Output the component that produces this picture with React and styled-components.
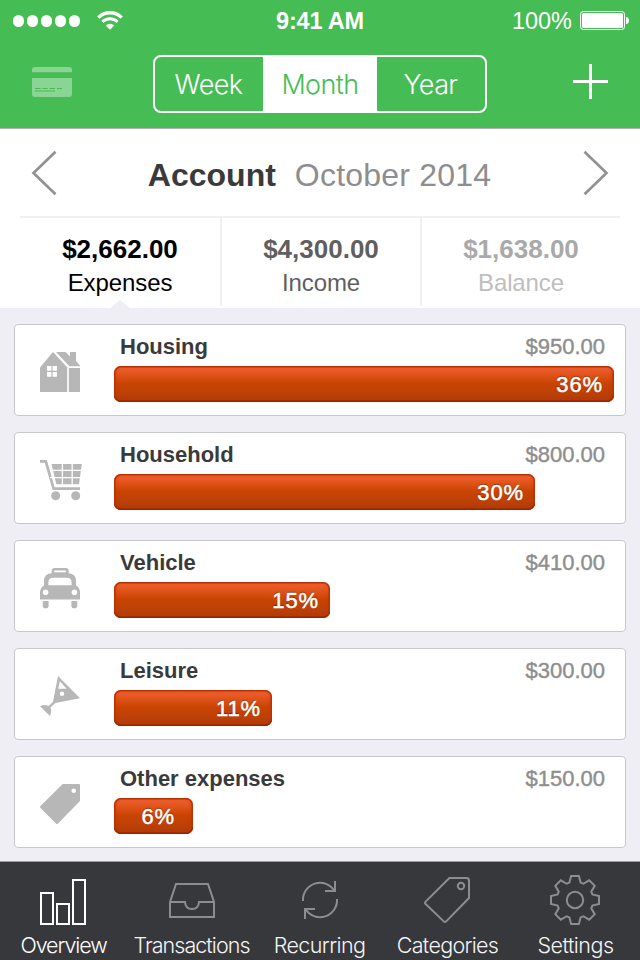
import React from "react"
import styled, { createGlobalStyle } from "styled-components"

const expenses = [
  { name: "Housing", amount: 950, percent: 36, icon: HouseIcon },
  { name: "Household", amount: 800, percent: 30, icon: CartIcon },
  { name: "Vehicle", amount: 410, percent: 15, icon: CarIcon },
  { name: "Leisure", amount: 300, percent: 11, icon: CocktailIcon },
  { name: "Other expenses", amount: 150, percent: 6, icon: TagIcon },
]

const stats = [
  { label: "Expenses", value: "$2,662.00", color: "#000", soft: "#000", active: true },
  { label: "Income", value: "$4,300.00", color: "#5f5f5f", soft: "#5f5f5f" },
  { label: "Balance", value: "$1,638.00", color: "#a9a9a9", soft: "#bebebe" },
]

const tabs = [
  { label: "Overview", icon: BarsIcon, active: true, track: -1.1 },
  { label: "Transactions", icon: TrayIcon, track: -0.95 },
  { label: "Recurring", icon: SyncIcon, track: -0.6 },
  { label: "Categories", icon: TagOutlineIcon, track: -0.7 },
  { label: "Settings", icon: GearIcon, track: -0.5 },
]

const maxAmount = Math.max(...expenses.map(e => e.amount))

function WifiIcon() {
  return (
    <svg width="26" height="20" viewBox="0 0 26 20" fill="none" stroke="#fff">
      <path d="M1.3 6.6A16.6 16.6 0 0 1 24.7 6.6" strokeWidth="3.4" />
      <path d="M5.4 10.9A10.9 10.9 0 0 1 20.6 10.9" strokeWidth="3" />
      <path d="M13 18.7L8.8 14.5A6 6 0 0 1 17.2 14.5Z" fill="#fff" stroke="none" />
    </svg>
  )
}

function BatteryIcon() {
  return (
    <svg width="50" height="20" viewBox="0 0 50 20">
      <rect x="0.5" y="0.5" width="44" height="18" rx="2.8" fill="none" stroke="#fff" />
      <rect x="2" y="2" width="41" height="15" rx="1.5" fill="#fff" />
      <path d="M46 6C50 6 50 13 46 13Z" fill="#fff" />
    </svg>
  )
}

function CardIcon() {
  return (
    <svg width="40" height="30" viewBox="0 0 40 30">
      <path d="M0 5.3V3A3 3 0 0 1 3 0H37A3 3 0 0 1 40 3V5.3Z" fill="#8ad495" />
      <path d="M0 11H40V27A3 3 0 0 1 37 30H3A3 3 0 0 1 0 27Z" fill="#8ad495" />
      <path d="M3 21.500H8.500M10.500 21.500H15.700M17.700 21.500H23M25 21.500H30M3 24H23" stroke="#46bc54" strokeWidth="1.2" />
    </svg>
  )
}

function PlusIcon() {
  return (
    <svg width="35" height="35" viewBox="0 0 35 35" stroke="#fff" strokeWidth="3">
      <path d="M0 17.5H35M17.5 0V35" />
    </svg>
  )
}

function Chevron({ flip }) {
  return (
    <svg width="26" height="46" viewBox="0 0 26 46" fill="none" stroke="#929292" strokeWidth="2.7">
      <path d={flip ? "M1.5 1.8L23.5 23L1.5 44.2" : "M24.5 1.8L2.5 23L24.5 44.2"} />
    </svg>
  )
}

function HouseIcon() {
  return (
    <svg width="42" height="41" viewBox="0 0 42 41" fill="#b7b7b7">
      <path d="M13 0L27.2 15.2V40H0V15.4Z" />
      <path d="M16 0H25.5L30 4.6V0H36V9L40 13.4V14.2H29.3Z" />
      <path d="M28.8 16H40V40H28.8Z" />
      <path d="M7 14H11.4V18.7H7ZM12.6 14H17V18.7H12.6ZM7 20H11.4V24.7H7ZM12.6 20H17V24.7H12.6Z" fill="#fff" />
    </svg>
  )
}

function CartIcon() {
  return (
    <svg width="42" height="41" viewBox="0 0 42 41" fill="#b7b7b7">
      <path d="M0 1.3H5.8L13.6 28.6H40" fill="none" stroke="#b7b7b7" strokeWidth="2.7" />
      <path d="M11.5 4H41.8L39 24.2H16.3Z" />
      <path d="M10 10.4H42M10 17.7H42M22.4 3V25M32.2 3V25" stroke="#fff" strokeWidth="1.3" />
      <circle cx="15.7" cy="35.7" r="4.5" />
      <circle cx="35.7" cy="35.7" r="4.5" />
    </svg>
  )
}

function CarIcon() {
  return (
    <svg width="42" height="41" viewBox="0 0 42 41" fill="#b7b7b7">
      <path d="M11.7 6V3Q11.7 0 15 0H25.4Q28.7 0 28.7 3V6Z" />
      <path d="M4 17.6V13Q4 5.2 12 5.2H28Q36 5.2 36 13V17.6Q40 20 40 25V31.6H0V25Q0 20 4 17.6Z" />
      <path d="M2.8 33H8.6V38Q8.6 40.3 5.7 40.3Q2.8 40.3 2.8 38ZM31.4 33H37.2V38Q37.2 40.3 34.3 40.3Q31.4 40.3 31.4 38Z" />
      <g fill="#fff">
        <rect x="14" y="2.5" width="12" height="1.7" rx="0.8" />
        <path d="M8.4 17.2V14.4Q8.4 9.7 13 9.7H27Q31.6 9.7 31.6 14.4V17.2Z" />
        <circle cx="5.6" cy="24.2" r="2.8" />
        <circle cx="34.4" cy="24.2" r="2.8" />
      </g>
    </svg>
  )
}

function CocktailIcon() {
  return (
    <svg width="42" height="41" viewBox="0 0 42 41" fill="#b7b7b7">
      <path d="M18 0L40 22.2L15.4 27L10.4 31.6Q12 36 10 40L0 30.2Q4 28 8.6 30L13 25.8Z" />
      <path d="M19.8 5.2L26.6 12.7H18.2Z" fill="#fff" />
      <circle cx="22" cy="17.8" r="2.2" fill="#fff" />
    </svg>
  )
}

function TagIcon() {
  return (
    <svg width="42" height="41" viewBox="0 0 42 41" fill="#b7b7b7">
      <path d="M22.7 0H39Q40 0 40 1V17L18 39.4Q17 40.4 16 39.4L0.5 24Q-0.4 23 0.5 22Z" />
      <circle cx="33.7" cy="6.7" r="2.3" fill="#fff" />
    </svg>
  )
}

function BarsIcon() {
  return (
    <TabSvg viewBox="0 0 52 52" $active>
      <path d="M3 19H15V50H3ZM19 30H31V50H19ZM35 6H47V50H35Z" />
    </TabSvg>
  )
}

function TrayIcon() {
  return (
    <TabSvg viewBox="0 0 52 52">
      <path d="M4 28L10 10H42L48 28V43H4Z" />
      <path d="M4 28H19Q19.4 35 26 35Q32.6 35 33 28H48" />
    </TabSvg>
  )
}

function SyncIcon() {
  return (
    <TabSvg viewBox="0 0 52 52">
      <path d="M9 27A17 17 0 0 1 40.5 17M31 17H41V7" />
      <path d="M43 25A17 17 0 0 1 11.5 35M21 35H11V45" />
    </TabSvg>
  )
}

function TagOutlineIcon() {
  return (
    <TabSvg viewBox="0 0 52 52">
      <path d="M27.4 4H44.5Q47 4 47 6.5V24L24.2 47.4Q23 48.6 21.8 47.4L3.6 30Q2.4 28.8 3.6 27.6Z" />
      <circle cx="39" cy="12" r="3.2" />
    </TabSvg>
  )
}

function GearIcon() {
  // eight teeth turned around the hub
  const teeth = [0, 1, 2, 3, 4, 5, 6, 7].flatMap(i => {
    const a = (i * Math.PI) / 4
    return [[-5.6, -17.4], [-3.9, -24], [3.9, -24], [5.6, -17.4]].map(
      ([x, y]) =>
        `${25 + x * Math.cos(a) - y * Math.sin(a)},${26 + x * Math.sin(a) + y * Math.cos(a)}`
    )
  })
  return (
    <TabSvg viewBox="0 0 52 52">
      <polygon points={teeth.join(" ")} />
      <circle cx="25" cy="26" r="8.2" />
    </TabSvg>
  )
}

const App = () => {
  return (
    <Screen>
      <GlobalStyle />
      <Header>
        <StatusBar>
          <Signal>
            <i /><i /><i /><i /><i />
            <WifiIcon />
          </Signal>
          <Clock>9:41 AM</Clock>
          <Power>
            <span>100%</span>
            <BatteryIcon />
          </Power>
        </StatusBar>
        <NavBar>
          <NavButton $top={12}>
            <CardIcon />
          </NavButton>
          <Segments>
            <Segment $width={108}>Week</Segment>
            <Segment $width={114} $active>Month</Segment>
            <Segment $width={108}>Year</Segment>
          </Segments>
          <NavButton $top={9}>
            <PlusIcon />
          </NavButton>
        </NavBar>
      </Header>

      <Summary>
        <Period>
          <Chevron />
          <Title>
            <strong>Account</strong>
            <span>October 2014</span>
          </Title>
          <Chevron flip />
        </Period>
        <Stats>
          {stats.map(s => (
            <Stat key={s.label} $color={s.color} $soft={s.soft} $active={s.active}>
              <strong>{s.value}</strong>
              <span>{s.label}</span>
            </Stat>
          ))}
        </Stats>
      </Summary>

      <List>
        {expenses.map(({ name, amount, percent, icon: Icon }) => (
          <Card key={name}>
            <IconCell>
              <Icon />
            </IconCell>
            <Details>
              <Row>
                <Name>{name}</Name>
                <Amount>${amount}.00</Amount>
              </Row>
              <Bar
                $short={percent < 10}
                style={{ width: Math.round((amount / maxAmount) * 500) }}
              >
                {percent}%
              </Bar>
            </Details>
          </Card>
        ))}
      </List>

      <TabBar>
        {tabs.map(({ label, icon: Icon, active, track }) => (
          <Tab key={label}>
            <Icon />
            <TabLabel $track={track} $active={active}>{label}</TabLabel>
          </Tab>
        ))}
      </TabBar>
    </Screen>
  )
}

const GlobalStyle = createGlobalStyle`
  * {
    box-sizing: border-box;
  }
  body {
    margin: 0;
    font-family: "Liberation Sans", Arial, sans-serif;
    -webkit-font-smoothing: antialiased;
  }
  svg {
    display: block;
    flex: none;
  }
`

const Screen = styled.div`
  display: flex;
  flex-direction: column;
  width: 640px;
  height: 960px;
  overflow: hidden;
  background: #efeef4;
`

const Header = styled.header`
  height: 129px;
  background: #46bc54;
  border-bottom: 1px solid #b2b2b2;
`

const StatusBar = styled.div`
  display: grid;
  grid-template-columns: 1fr auto 1fr;
  align-items: center;
  height: 41px;
  padding: 0 10px 0 13px;
  color: #fff;
`

const Signal = styled.div`
  display: flex;
  align-items: center;
  gap: 2.8px;
  i {
    width: 11.2px;
    height: 11.2px;
    border-radius: 50%;
    background: #fff;
  }
  svg {
    margin-left: 14.5px;
  }
`

const Clock = styled.div`
  padding-right: 3px;
  font-size: 23.5px;
  font-weight: 700;
  letter-spacing: -0.2px;
  line-height: 42px;
`

const Power = styled.div`
  display: flex;
  align-items: center;
  justify-content: flex-end;
  gap: 8px;
  font-size: 23.5px;
  line-height: 42px;
`

const NavBar = styled.nav`
  display: flex;
  justify-content: space-between;
  align-items: flex-start;
  padding: 14px 32px 0;
`

const NavButton = styled.div`
  width: 40px;
  padding-top: ${p => p.$top}px;
  svg {
    margin-left: auto;
  }
`

const Segments = styled.div`
  display: flex;
  height: 58px;
  border: 2px solid #fff;
  border-radius: 8px;
`

const Segment = styled.div`
  width: ${p => p.$width}px;
  padding-right: ${p => (p.$active ? 0 : 1)}px;
  font-family: Inter, "Liberation Sans", sans-serif;
  font-size: 27px;
  font-weight: 300;
  letter-spacing: -0.6px;
  line-height: 55px;
  text-align: center;
  color: ${p => (p.$active ? "#46bc54" : "#fff")};
  background: ${p => (p.$active ? "#fff" : "transparent")};
`

const Summary = styled.section`
  height: 179px;
  background: #fff;
`

const Period = styled.div`
  display: flex;
  align-items: center;
  justify-content: space-between;
  height: 89px;
  margin: 0 20px;
  padding: 0 11px;
  border-bottom: 2px solid #f0f0f0;
`

const Title = styled.div`
  display: flex;
  gap: 19px;
  padding: 4px 1px 0 0;
  font-size: 32px;
  line-height: 40px;
  strong {
    color: #3a3a3a;
  }
  span {
    letter-spacing: 0.2px;
    color: #8e8e8e;
  }
`

const Stats = styled.div`
  display: flex;
  height: 90px;
  margin: 0 20px;
`

const Stat = styled.div`
  position: relative;
  flex: none;
  width: 200px;
  height: 88px;
  padding-top: 14px;
  text-align: center;
  line-height: 34px;
  &:not(:first-child) {
    border-left: 2px solid #f0f0f0;
  }
  strong,
  span {
    display: block;
  }
  strong {
    font-size: 26px;
    color: ${p => p.$color};
  }
  span {
    font-size: 24px;
    letter-spacing: -0.1px;
    color: ${p => p.$soft};
  }
  &:after {
    content: "";
    display: ${p => (p.$active ? "block" : "none")};
    position: absolute;
    left: 90px;
    bottom: -2px;
    border: 10px solid transparent;
    border-top: 0;
    border-bottom: 8px solid #efeef4;
  }
`

const List = styled.main`
  display: flex;
  flex-direction: column;
  gap: 16px;
  height: 553px;
  padding: 16px 14px 0;
`

const Card = styled.article`
  display: flex;
  flex: none;
  height: 92px;
  background: #fff;
  border: 1px solid #c8c8cb;
  border-radius: 4px;
`

const IconCell = styled.div`
  width: 99px;
  padding: 27px 0 0 25px;
`

const Details = styled.div`
  flex: 1;
  padding-top: 9px;
`

const Row = styled.div`
  display: flex;
  justify-content: space-between;
  padding: 0 20px 0 6px;
  font-size: 22px;
  line-height: 25px;
`

const Name = styled.div`
  font-weight: 700;
  color: #3a3a3a;
`

const Amount = styled.div`
  color: #8e8e8e;
  -webkit-text-stroke: 0.4px #8e8e8e;
`

const Bar = styled.div`
  height: 36px;
  margin-top: 7px;
  padding-right: ${p => (p.$short ? 18 : 11)}px;
  border-radius: 7px;
  background: linear-gradient(#f4663a, #e4561f 20%, #c94403 48%, #bf4106 70%, #b13b09);
  box-shadow: inset 0 -1.5px 0 #952500, inset 0 0 0 1.5px #bd3004,
    inset 0 0 4px 1px rgba(190, 45, 0, 0.4);
  color: #fff;
  font-size: 22px;
  letter-spacing: 0.9px;
  line-height: 37px;
  text-align: right;
  text-shadow: 0 -1px 1px rgba(60, 10, 0, 0.6);
  -webkit-text-stroke: 0.5px #fff;
`

const TabBar = styled.footer`
  display: flex;
  height: 99px;
  border-top: 1px solid #9c9ca0;
  background: #37383c;
`

const Tab = styled.div`
  display: flex;
  flex-direction: column;
  align-items: center;
  width: 128px;
  padding-top: 12px;
`

const TabSvg = styled.svg`
  width: 52px;
  height: 52px;
  fill: none;
  stroke: ${p => (p.$active ? "#fff" : "#8d8d8f")};
  stroke-width: 2;
`

const TabLabel = styled.div`
  padding-right: 1px;
  font-family: Inter, "Liberation Sans", sans-serif;
  font-size: 21.5px;
  font-weight: 300;
  letter-spacing: ${p => p.$track}px;
  line-height: 38px;
  white-space: nowrap;
  color: ${p => (p.$active ? "#fff" : "#f4f4f4")};
`

export default App
